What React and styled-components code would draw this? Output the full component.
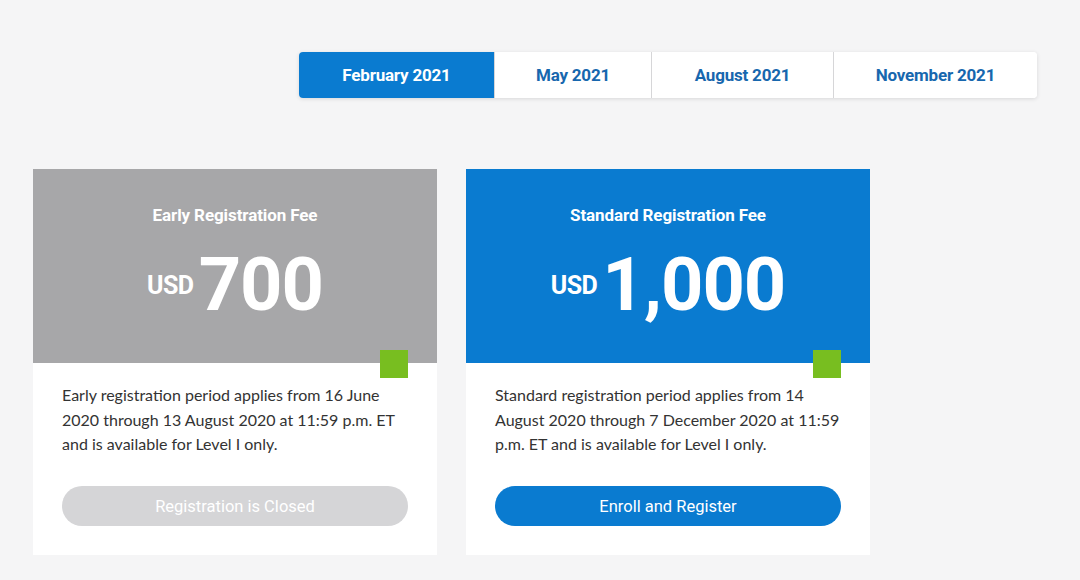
import React, { useState } from 'react';
import styled, { createGlobalStyle } from 'styled-components';

const GlobalStyle = createGlobalStyle`
  html, body {
    margin: 0;
    padding: 0;
    background: #f5f5f6;
  }
  body {
    font-family: Lato, "Liberation Sans", sans-serif;
  }
`;

const sessions = ['February 2021', 'May 2021', 'August 2021', 'November 2021'];
const tabWidths = [195, 157, 182, 204];

const fees = [
  {
    id: 'early',
    title: 'Early Registration Fee',
    amount: '700',
    closed: true,
    text: 'Early registration period applies from 16 June 2020 through 13 August 2020 at 11:59 p.m. ET and is available for Level I only.',
    action: 'Registration is Closed',
  },
  {
    id: 'standard',
    title: 'Standard Registration Fee',
    amount: '1,000',
    closed: false,
    text: 'Standard registration period applies from 14 August 2020 through 7 December 2020 at 11:59 p.m. ET and is available for Level I only.',
    action: 'Enroll and Register',
  },
];

const App = () => {
  const [active, setActive] = useState(0);

  return (
    <Page>
      <GlobalStyle />
      <TabsRow>
        <Tabs>
          {sessions.map((s, i) => (
            <Tab key={s} $width={tabWidths[i]} $active={i === active} onClick={() => setActive(i)}>
              {s}
            </Tab>
          ))}
        </Tabs>
      </TabsRow>

      <Cards>
        {fees.map(fee => (
          <Card key={fee.id}>
            <CardHead $closed={fee.closed}>
              <FeeTitle>{fee.title}</FeeTitle>
              <Price>
                <Currency>USD</Currency>
                <Amount>{fee.amount}</Amount>
              </Price>
              <Accent />
            </CardHead>
            <CardBody>
              <Description>{fee.text}</Description>
              <ActionButton $closed={fee.closed} disabled={fee.closed}>
                {fee.action}
              </ActionButton>
            </CardBody>
          </Card>
        ))}
      </Cards>
    </Page>
  );
};

export default App;

// Styling
const Page = styled.div`
  width: 1080px;
  height: 580px;
  box-sizing: border-box;
  padding: 52px 43px 0 33px;
  overflow: hidden;
`;

const TabsRow = styled.div`
  display: flex;
  justify-content: flex-end;
`;

const Tabs = styled.div`
  display: flex;
  background: #fff;
  border-radius: 4px;
  box-shadow: 0 1px 4px rgba(0, 0, 0, 0.12);
  overflow: hidden;
`;

const Tab = styled.button`
  width: ${p => p.$width}px;
  height: 46px;
  border: none;
  border-left: 1px solid ${p => (p.$active ? 'transparent' : '#d6d6d8')};
  &:first-child {
    border-left: none;
  }
  background: ${p => (p.$active ? '#0a7bd0' : '#fff')};
  color: ${p => (p.$active ? '#fff' : '#1767ae')};
  font-family: Roboto, "Liberation Sans", sans-serif;
  font-weight: 700;
  font-size: 17px;
  letter-spacing: -0.2px;
  cursor: pointer;
  padding: 0;
`;

const Cards = styled.div`
  display: flex;
  gap: 29px;
  margin-top: 71px;
`;

const Card = styled.div`
  width: 404px;
  background: #fff;
  display: flex;
  flex-direction: column;
`;

const CardHead = styled.div`
  position: relative;
  height: 194px;
  background: ${p => (p.$closed ? '#a7a7a9' : '#0a7bd0')};
  display: flex;
  flex-direction: column;
  align-items: center;
  padding-top: 35px;
  box-sizing: border-box;
  color: #fff;
`;

const FeeTitle = styled.div`
  font-family: Roboto, "Liberation Sans", sans-serif;
  font-weight: 700;
  font-size: 17px;
  line-height: 22px;
  letter-spacing: -0.1px;
`;

const Price = styled.div`
  display: flex;
  align-items: center;
  gap: 5px;
  margin-top: 14px;
  font-family: Roboto, "Liberation Sans", sans-serif;
  font-weight: 700;
`;

const Currency = styled.span`
  font-size: 25px;
  letter-spacing: -0.5px;
`;

const Amount = styled.span`
  font-size: 74px;
  line-height: 90px;
  letter-spacing: -1px;
`;

const Accent = styled.div`
  position: absolute;
  right: 29px;
  bottom: -15px;
  width: 28px;
  height: 28px;
  background: #78be20;
`;

const CardBody = styled.div`
  padding: 20px 29px 29px;
  display: flex;
  flex-direction: column;
`;

const Description = styled.p`
  margin: 0;
  font-family: Lato, "Liberation Sans", sans-serif;
  font-size: 16px;
  line-height: 24.5px;
  color: #333;
  min-height: 74px;
`;

const ActionButton = styled.button`
  margin-top: 29px;
  height: 40px;
  border: none;
  border-radius: 20px;
  background: ${p => (p.$closed ? '#d5d5d7' : '#0a7bd0')};
  color: #fff;
  font-family: Roboto, "Liberation Sans", sans-serif;
  font-size: 16.5px;
  cursor: ${p => (p.$closed ? 'default' : 'pointer')};
`;
